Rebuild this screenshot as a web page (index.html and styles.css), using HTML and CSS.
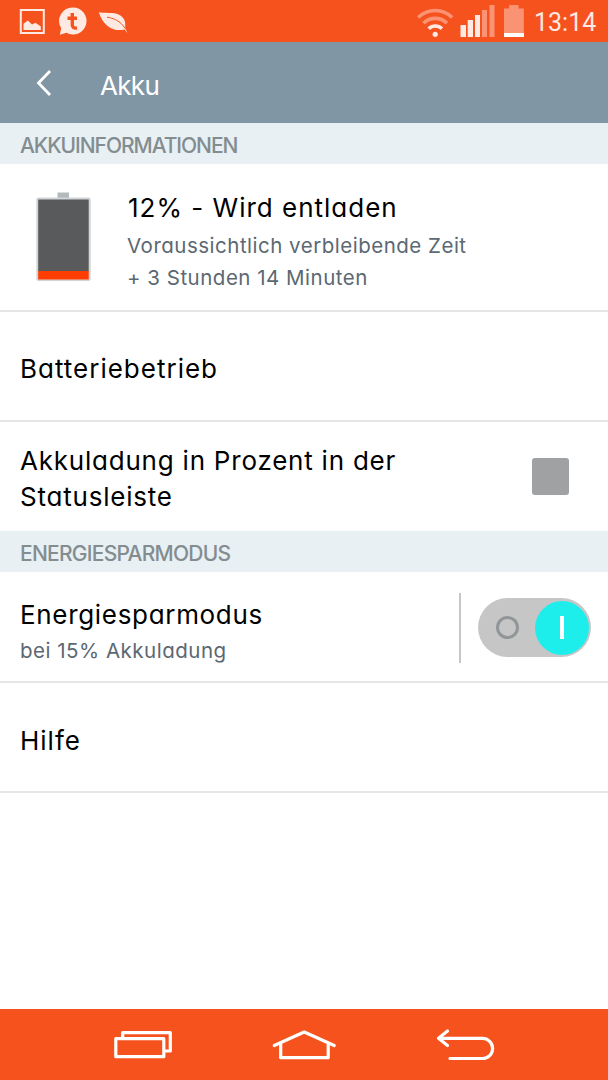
FILE: index.html
```
<!DOCTYPE html>
<html lang="de">
<head>
  <meta charset="UTF-8" />
  <meta name="viewport" content="width=device-width, initial-scale=1.0"/>
  <title>Akku</title>
  <link rel="stylesheet" href="styles.css">
</head>
<body>
  <!-- Status bar -->
  <div class="statusbar">
    <svg class="status-left" width="130" height="42" viewBox="0 0 130 42">
      <rect x="20.800" y="10" width="23" height="23" fill="none" stroke="#ffe9e3" stroke-width="2"/>
      <path d="M23.500 30V23.800L27.800 20.500L32 24.500L35.500 22.800L40.800 26.500V30Z" fill="#ffe9e3"/>
      <path d="M73 7.500a13.500 13.500 0 1 1-6.500 25.300L59.800 34.800L61.200 28.200A13.500 13.500 0 0 1 73 7.500Z" fill="#ffe9e3"/>
      <path d="M72.300 13V25Q72.300 28.600 77 28M67.500 18.200H77" fill="none" stroke="#f6521e" stroke-width="3.400"/>
      <path d="M98.800 12.200C108 14 118 10.500 123.500 18.500C126 22 125 26 125.300 28.500L127.500 33L124.500 29.500C114 32 103.500 27 98.800 12.200Z" fill="#ffe9e3"/>
      <path d="M107 17.200C113 18 121 21 125 28.500" fill="none" stroke="#f6521e" stroke-width="1"/>
    </svg>
    <div class="status-right">
      <svg width="124" height="42" viewBox="0 0 124 42">
        <g fill="none" stroke-width="3.600">
          <path d="M18.200 17.500A24 24 0 0 1 52.200 17.500" stroke="#fa9374"/>
          <path d="M23.500 23.200A16.500 16.500 0 0 1 46.900 23.200" stroke="#fa9374"/>
          <path d="M28.700 28.700A9.500 9.500 0 0 1 41.900 28.700" stroke="#ffe9e3"/>
        </g>
        <circle cx="35.200" cy="34.300" r="2.600" fill="#ffe9e3"/>
        <path d="M60.500 25h5.500v12h-5.500zM67.700 20h5.300v17h-5.300zM75 15h5v22h-5z" fill="#ffe9e3"/>
        <path d="M82 10h5v27h-5zM89.500 5h5v32h-5z" fill="#fa9374"/>
        <path d="M104 8.500h5.200V5h9.300v3.500h5.300V33H104z" fill="#fa9374"/>
        <rect x="104" y="33" width="20" height="4" fill="#fff"/>
      </svg>
      <span class="clock">13:14</span>
    </div>
  </div>

  <!-- Title bar -->
  <div class="header">
    <svg class="back" width="16" height="28" viewBox="0 0 16 28">
      <path d="M14 2L2.500 14L14 26" fill="none" stroke="#fff" stroke-width="2.800"/>
    </svg>
    <h1>Akku</h1>
  </div>

  <div class="content">
    <h2 class="info-title">AKKUINFORMATIONEN</h2>

    <div class="row battery-row">
      <svg class="battery" width="55" height="90" viewBox="0 0 55 90">
        <rect x="21.500" y="0.500" width="11.500" height="6" fill="#b3b9bc"/>
        <rect x="0.300" y="5.500" width="54.400" height="83.500" rx="2" fill="#d1d4d6"/>
        <rect x="2.200" y="7.500" width="50.500" height="72" fill="#595a5c"/>
        <rect x="2.200" y="79" width="50.500" height="8.500" fill="#ff3d00"/>
      </svg>
      <div>
        <div class="name charge">12% - Wird entladen</div>
        <div class="sub remaining">Voraussichtlich verbleibende Zeit<br>+ 3 Stunden 14 Minuten</div>
      </div>
    </div>

    <div class="row usage-row">
      <div class="name usage">Batteriebetrieb</div>
    </div>

    <div class="row percent-row">
      <div class="name percent">Akkuladung in Prozent in der<br>Statusleiste</div>
      <div class="checkbox"></div>
    </div>

    <h2 class="saver-title">ENERGIESPARMODUS</h2>

    <div class="row saver-row">
      <div class="saver-text">
        <div class="name saver">Energiesparmodus</div>
        <div class="sub saver-sub">bei 15% Akkuladung</div>
      </div>
      <div class="toggle">
        <span class="off"></span>
        <span class="knob"></span>
      </div>
    </div>

    <div class="row help-row">
      <div class="name help">Hilfe</div>
    </div>
  </div>

  <!-- Navigation keys -->
  <div class="navbar">
    <svg width="608" height="71" viewBox="0 0 608 71">
      <g fill="none" stroke="#fff" stroke-width="3.200" stroke-linejoin="round" stroke-linecap="round">
        <rect x="115.800" y="29.700" width="48" height="18"/>
        <path d="M122.700 29V23.600H170.300V42H165"/>
        <path d="M274.300 36.500L304.200 23L334.200 36.500"/>
        <path d="M280.700 35V48.700H328.200V35"/>
        <path d="M447.500 22L438.500 29.300L447.500 36.500M439 29.300H482.500A10 10 0 0 1 482.500 49.500H450"/>
      </g>
    </svg>
  </div>
</body>
</html>
```

FILE: styles.css
```
* {
  box-sizing: border-box;
}
body {
  margin: 0;
  height: 1080px;
  display: flex;
  flex-direction: column;
  background: #fff;
  font-family: Inter, "Liberation Sans", sans-serif;
  font-feature-settings: "cv11";
}
svg {
  display: block;
  flex-shrink: 0;
}
.statusbar {
  height: 42px;
  display: flex;
  justify-content: space-between;
  background: #f6521e;
}
.status-right {
  display: flex;
  align-items: center;
  gap: 10px;
  padding-right: 12px;
}
.clock {
  width: 62px;
  font-family: Roboto, sans-serif;
  font-size: 25px;
  line-height: 42px;
  padding-top: 4px;
  color: #ffe9e3;
}
.header {
  height: 81px;
  display: flex;
  align-items: center;
  padding-left: 36px;
  background: #8096a4;
}
h1 {
  margin: 6px 0 0 48px;
  font-size: 26px;
  font-weight: 400;
  letter-spacing: -0.7px;
  color: #fff;
}
h2 {
  height: 41px;
  margin: 0;
  padding: 2px 20px 0;
  font-size: 21px;
  line-height: 41px;
  font-weight: 500;
  color: #838d90;
  background: #e8f0f4;
}
.info-title {
  letter-spacing: -1.05px;
}
.saver-title {
  letter-spacing: -0.75px;
}
.content {
  flex: 1;
}
.row {
  display: flex;
  align-items: center;
  padding-left: 20px;
  border-bottom: 2px solid #e6e6e6;
}
.name {
  font-size: 26px;
  line-height: 36px;
  letter-spacing: 1px;
  color: #000;
  white-space: nowrap;
}
.sub {
  font-size: 20.5px;
  line-height: 32px;
  letter-spacing: 0.5px;
  color: #5b6872;
  white-space: nowrap;
}
.battery-row {
  height: 148px;
  padding-left: 36px;
}
.battery {
  margin-right: 36px;
}
.charge {
  padding: 10px 0 4px 1px;
}
.usage-row {
  height: 110px;
  padding-top: 6px;
}
.percent-row {
  height: 109px;
  justify-content: space-between;
  padding-right: 39px;
  border-bottom: none;
}
.percent {
  padding-top: 5px;
  letter-spacing: 0.78px;
}
.checkbox {
  width: 37px;
  height: 37px;
  border-radius: 3px;
  background: #a0a1a3;
}
.saver-row {
  height: 111px;
  padding-top: 2px;
}
.saver-text {
  width: 441px;
  height: 70px;
  padding-top: 4px;
  border-right: 2px solid #c6c6c6;
}
.saver {
  letter-spacing: 0.68px;
}
.saver-sub {
  line-height: 36px;
}
.toggle {
  width: 113px;
  height: 59px;
  margin-left: 17px;
  display: flex;
  align-items: center;
  justify-content: space-between;
  padding: 0 2px 0 18px;
  border-radius: 30px;
  background: #c6c6c6;
}
.off {
  width: 23px;
  height: 23px;
  border: 3px solid #919799;
  border-radius: 50%;
}
.knob {
  width: 54px;
  height: 54px;
  display: flex;
  align-items: center;
  justify-content: center;
  border-radius: 50%;
  background: #1deeec;
}
.knob::after {
  content: "";
  width: 4px;
  height: 23px;
  background: #fff;
}
.help-row {
  height: 110px;
  padding-top: 7px;
}
.navbar {
  height: 71px;
  background: #f6521e;
}
```
